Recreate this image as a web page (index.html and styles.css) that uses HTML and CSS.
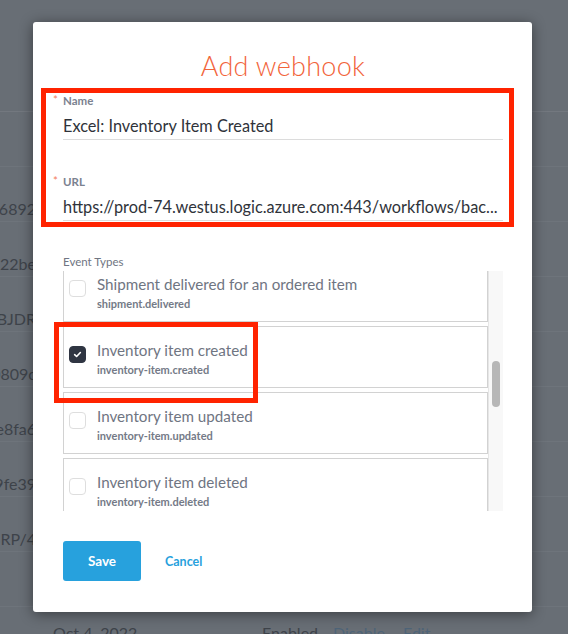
FILE: index.html
```html
<!DOCTYPE html>
<html lang="en">
<head>
<meta charset="utf-8">
<title>Add webhook</title>
<link rel="stylesheet" href="styles.css">
</head>
<body>
<div class="page">
  <div class="table">
    <div class="row row-head"></div>
    <div class="row"></div>
    <div class="row"><span class="id">5fa86892</span></div>
    <div class="row"><span class="id">a7f122be</span></div>
    <div class="row"><span class="id">7WBJDR</span></div>
    <div class="row"><span class="id">e20809c</span></div>
    <div class="row"><span class="id">b1e8fa6</span></div>
    <div class="row"><span class="id">5c9fe39</span></div>
    <div class="row"><span class="id">H3RP/4</span></div>
    <div class="row"></div>
    <div class="row row-last">
      <span class="date">Oct 4, 2022</span>
      <span class="status">Enabled</span>
      <span class="link">Disable</span>
      <span class="link">Edit</span>
    </div>
  </div>
</div>

<div class="modal">
  <h1 class="title">Add webhook</h1>
  <div class="field">
    <label class="label"><span class="req">*</span>Name</label>
    <div class="input">Excel: Inventory Item Created</div>
  </div>
  <div class="field">
    <label class="label"><span class="req">*</span>URL</label>
    <div class="input">https://prod-74.westus.logic.azure.com:443/workflows/bac...</div>
  </div>
  <div class="events">
    <div class="label plain">Event Types</div>
    <div class="list">
      <div class="items">
        <div class="item first">
          <span class="check"></span>
          <div class="text"><div class="item-title">Shipment delivered for an ordered item</div><div class="item-sub">shipment.delivered</div></div>
        </div>
        <div class="item">
          <span class="check checked"><svg viewBox="0 0 10 10" width="9" height="9"><path d="M1.8 5.2 L4 7.2 L8.2 2.8" fill="none" stroke="#fff" stroke-width="1.8" stroke-linecap="round" stroke-linejoin="round"/></svg></span>
          <div class="text"><div class="item-title">Inventory item created</div><div class="item-sub">inventory-item.created</div></div>
        </div>
        <div class="item">
          <span class="check"></span>
          <div class="text"><div class="item-title">Inventory item updated</div><div class="item-sub">inventory-item.updated</div></div>
        </div>
        <div class="item">
          <span class="check"></span>
          <div class="text"><div class="item-title">Inventory item deleted</div><div class="item-sub">inventory-item.deleted</div></div>
        </div>
      </div>
      <div class="track"><div class="thumb"></div></div>
    </div>
  </div>
  <div class="actions">
    <button class="btn-save">Save</button>
    <span class="btn-cancel">Cancel</span>
  </div>
  <div class="mark mark-fields"></div>
  <div class="mark mark-item"></div>
</div>
</body>
</html>
```
FILE: styles.css
```css
* { box-sizing: border-box; }
html, body { margin: 0; padding: 0; }
body {
  width: 568px;
  height: 634px;
  overflow: hidden;
  background: #686e75;
  font-family: Lato, "Open Sans", "Liberation Sans", sans-serif;
  position: relative;
}
.page { width: 568px; height: 634px; overflow: hidden; }
.row {
  height: 55px;
  border-bottom: 1px solid #6e747b;
  display: flex;
  align-items: flex-end;
  padding-bottom: 3px;
  font-size: 16px;
  color: #3e434a;
}
.row-head { height: 112px; border-bottom: 1px solid #73787f; }
.row .id { width: 36px; overflow: hidden; display: flex; justify-content: flex-end; white-space: nowrap; }
.row-last { align-items: flex-start; padding: 16px 0 0 53px; border-bottom: 0; }
.row-last .date { width: 209px; }
.row-last .status { width: 71px; }
.row-last .link { color: #4e6478; width: 70px; }

.modal {
  position: absolute;
  left: 33px;
  top: 22px;
  width: 499px;
  height: 590px;
  background: #fff;
  border-radius: 3px;
  box-shadow: 0 2px 14px rgba(0,0,0,0.45);
  padding: 29px 29px 30px 30px;
  display: flex;
  flex-direction: column;
}
.title {
  margin: 0 0 13px;
  text-align: center;
  font-weight: 300;
  font-size: 27px;
  line-height: 30px;
  color: #f2643a;
  letter-spacing: 0.3px;
}
.field { margin-bottom: 35px; }
.field + .field { margin-bottom: 34px; }
.label {
  display: block;
  position: relative;
  font-size: 11.5px;
  line-height: 14px;
  font-weight: 700;
  color: #7b8290;
}
.label.plain { font-weight: 400; color: #6f7582; }
.req {
  position: absolute;
  left: -10px;
  top: -1px;
  color: #f47d5c;
  font-weight: 400;
}
.input {
  height: 32px;
  padding-top: 8px;
  font-size: 16.3px;
  line-height: 20px;
  color: #2f333a;
  border-bottom: 1px solid #dcdcdc;
  white-space: nowrap;
  overflow: hidden;
}
.events .label { margin-bottom: 2px; }
.list {
  height: 240px;
  display: flex;
  overflow: hidden;
}
.items {
  width: 425px;
  margin-top: -11px;
  display: flex;
  flex-direction: column;
  gap: 4px;
}
.item {
  flex: none;
  height: 62px;
  border: 1px solid #d2d2d2;
  display: flex;
  align-items: flex-start;
  padding: 19px 0 0 5px;
}
.check {
  flex: none;
  width: 17px;
  height: 17px;
  border: 1px solid #dedede;
  border-radius: 4px;
  margin-right: 11px;
  display: flex;
  align-items: center;
  justify-content: center;
}
.check.checked { background: #2f3542; border-color: #2f3542; }
.text { margin-top: -5px; }
.item-title {
  font-size: 15.2px;
  line-height: 19px;
  color: #6f7582;
}
.item-sub {
  font-size: 11px;
  line-height: 19px;
  font-weight: 700;
  color: #747a87;
}
.track {
  width: 15px;
  background: #f8f8f8;
  border-left: 1px solid #e6e6e6;
  padding: 90px 0 0 3px;
}
.thumb { width: 8px; height: 46px; border-radius: 4px; background: #b7b7b7; }
.actions {
  margin-top: 30px;
  display: flex;
  align-items: center;
  gap: 24px;
}
.btn-save {
  width: 78px;
  height: 40px;
  border: 0;
  border-radius: 3px;
  background: #27a1dd;
  color: #fff;
  font-family: inherit;
  font-size: 13.5px;
  font-weight: 700;
  padding: 0;
}
.btn-cancel { color: #27a1dd; font-size: 12.5px; font-weight: 700; }
.mark { position: absolute; border: 5px solid #ff2300; }
.mark-fields { left: 8px; top: 66px; width: 473px; height: 139px; }
.mark-item { left: 21px; top: 300px; width: 204px; height: 81px; }
```
